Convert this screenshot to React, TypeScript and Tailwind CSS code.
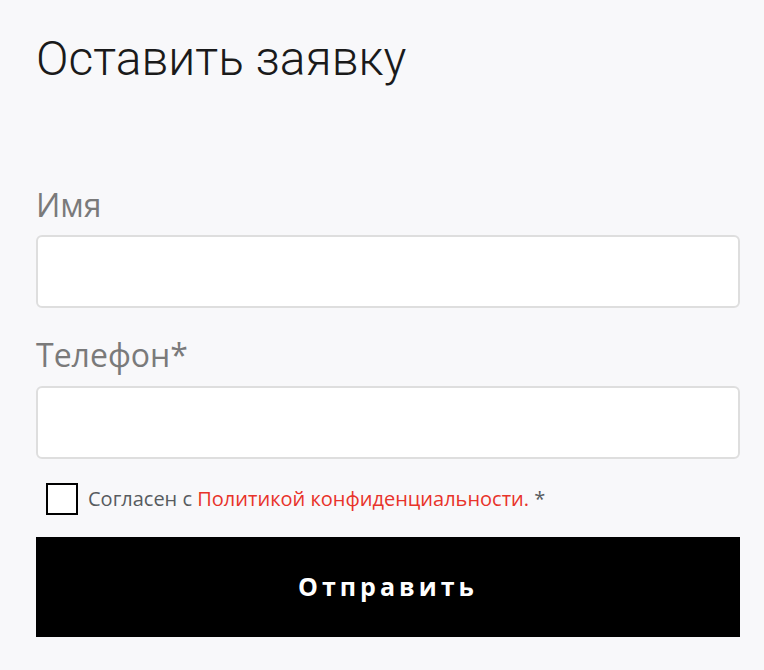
export default function App() {
  return (
    <div className="min-h-[670px] w-[764px] bg-[#f8f8fa] px-[36px] pt-[29px]">
      <h1 className="font-['Roboto',sans-serif] font-light text-[48px] leading-[60px] text-[#1a1a1a]">
        Оставить заявку
      </h1>
      <div className="mt-[96px] font-['Open_Sans',sans-serif]">
        <label className="block text-[32px] leading-[40px] text-[#7a7a7a]">Имя</label>
        <input className="mt-[10px] block h-[73px] w-[704px] rounded-[6px] border-2 border-[#dedede] bg-white outline-none" />
        <label className="mt-[27px] block text-[32px] leading-[40px] text-[#7a7a7a]">Телефон*</label>
        <input className="mt-[11px] block h-[73px] w-[704px] rounded-[6px] border-2 border-[#dedede] bg-white outline-none" />
        <div className="mt-[24px] flex h-[32px] items-center pl-[10px]">
          <span className="block h-[32px] w-[32px] shrink-0 border-2 border-black bg-white" />
          <span className="ml-[10px] text-[20px] leading-[28px] text-[#575b5f]">
            Согласен с <span className="text-[#e8332a]">Политикой конфиденциальности.</span> *
          </span>
        </div>
        <button className="mt-[22px] flex h-[100px] w-[704px] items-center justify-center bg-black text-[25px] font-bold tracking-[4px] text-white">
          Отправить
        </button>
      </div>
    </div>
  );
}
